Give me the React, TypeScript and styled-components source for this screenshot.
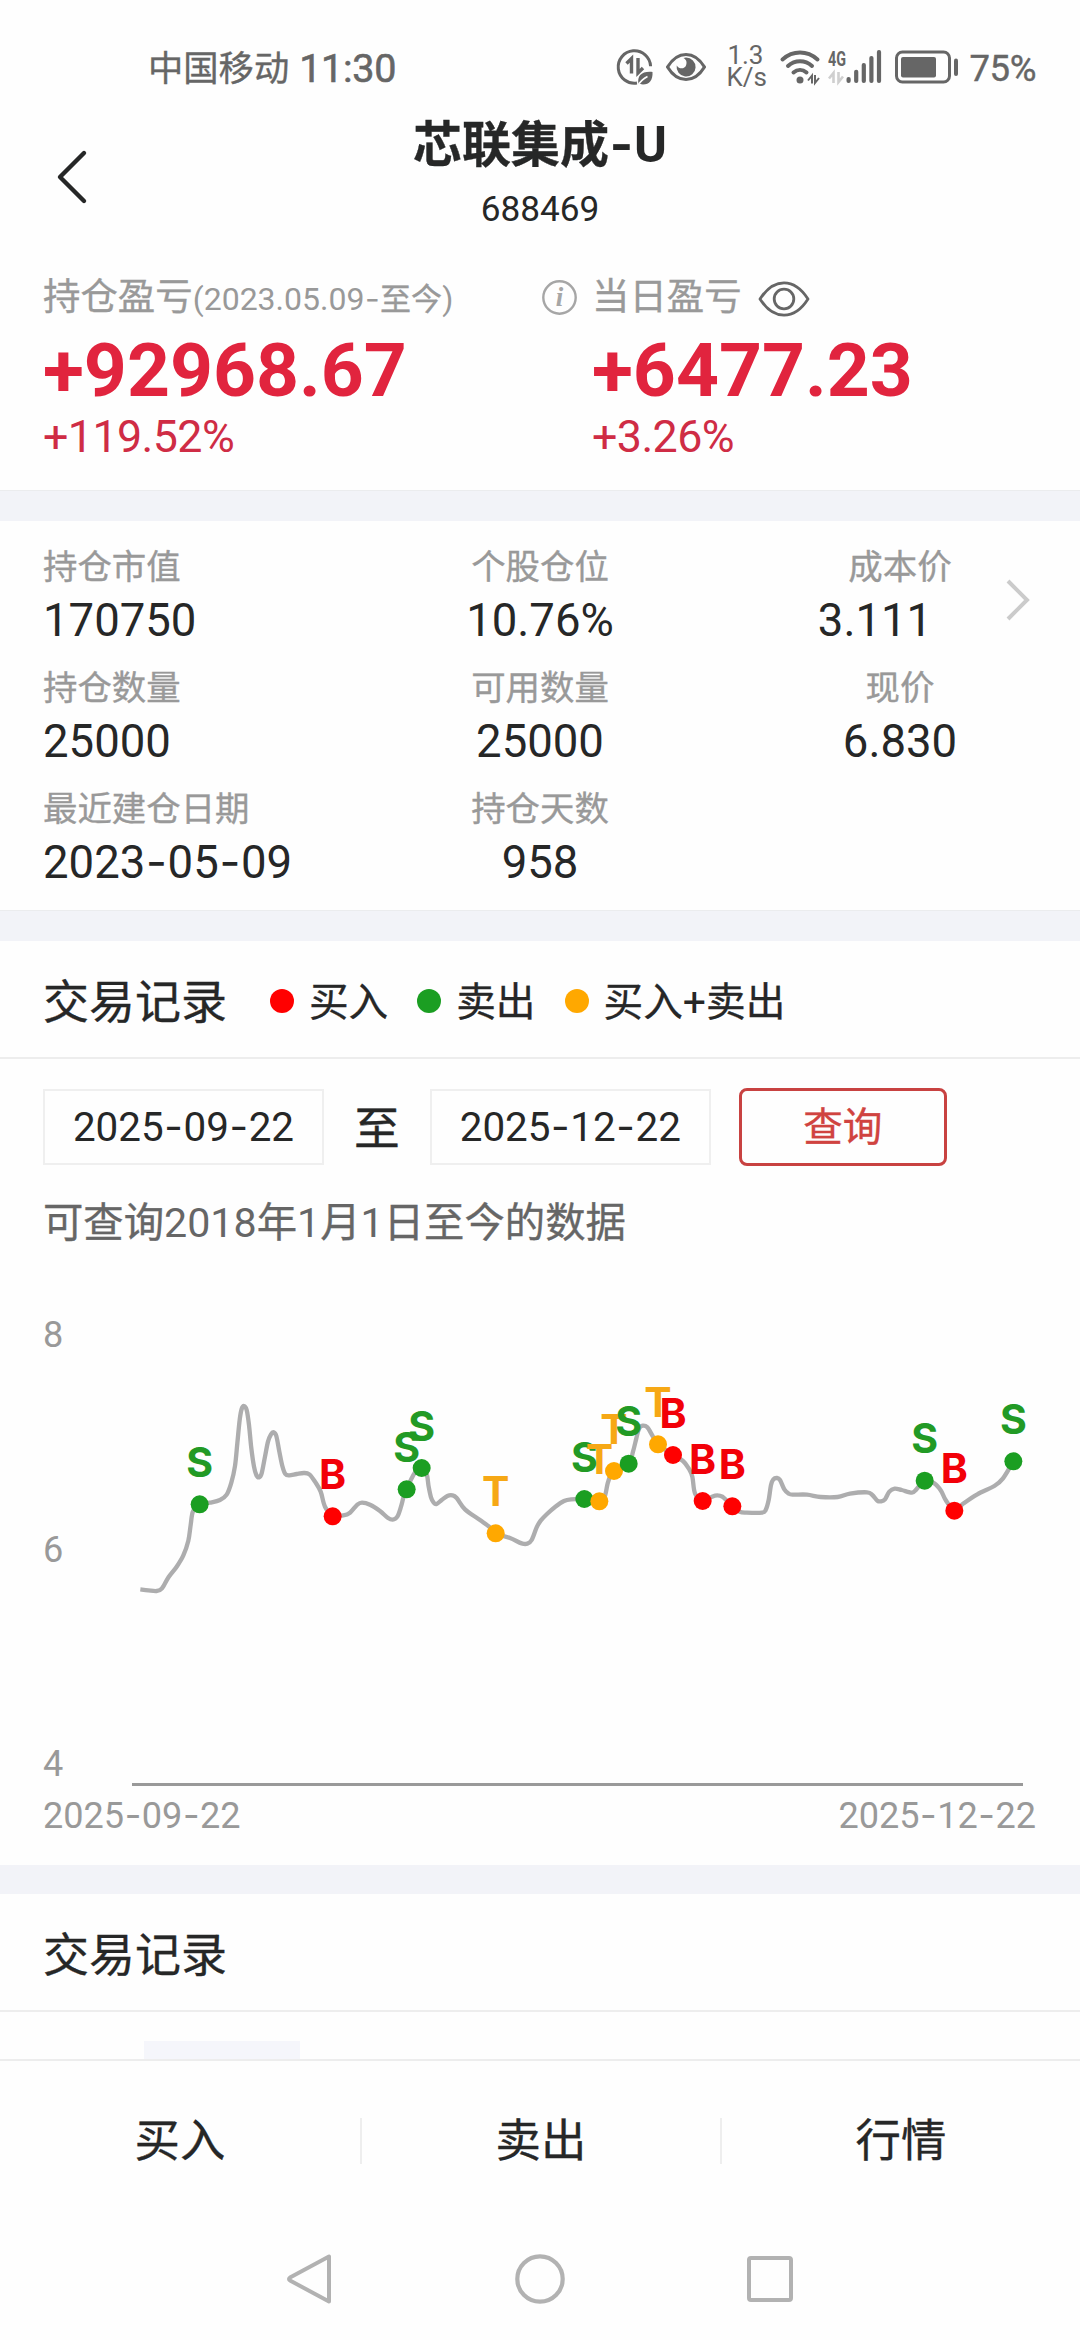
import React from 'react';
import styled, { createGlobalStyle, css } from 'styled-components';

const LATIN = `Roboto, "Noto Sans", "Noto Sans CJK SC", sans-serif`;
const HAN = `"Noto Sans CJK SC", "Noto Sans", sans-serif`;

const GlobalStyle = createGlobalStyle`
  *, *::before, *::after { box-sizing: border-box; }
  body { margin: 0; background: #fefefe; font-family: ${LATIN}; color: #262727; }
  svg { display: block; flex: none; overflow: visible; }
  button { font: inherit; color: inherit; background: none; border: 0; padding: 0; }
`;

const line = (size: number, height: number) => css`
  font-size: ${size}px;
  line-height: ${height}px;
  height: ${height}px;
  white-space: nowrap;
`;

/* ---------- mixed script text ---------- */

const HanRun = styled.span<{ $scale: number }>`
  font-family: ${HAN};
  font-size: ${p => p.$scale}em;
  line-height: 0;
  -webkit-text-stroke: 0.35px currentColor;
`;

const Dash = styled.span`
  font-family: Inter, sans-serif;
  font-size: 1em;
  line-height: 0;
  padding: 0 0.015em;
`;

function Runs({ text, scale = 0.97 }: { text: string; scale?: number }) {
  const parts = text.split(/([\u4e00-\u9fff]+|-)/).filter(Boolean);
  return (
    <>
      {parts.map((part, i) => {
        if (part === '-') return <Dash key={i}>-</Dash>;
        if (/[\u4e00-\u9fff]/.test(part)) return <HanRun key={i} $scale={scale}>{part}</HanRun>;
        return <React.Fragment key={i}>{part}</React.Fragment>;
      })}
    </>
  );
}

/* ---------- page frame ---------- */

const Screen = styled.div`
  width: 1080px;
  height: 2340px;
  overflow: hidden;
  display: flex;
  flex-direction: column;
  background: #fefefe;
`;

const Band = styled.div<{ $height: number; $edge?: boolean }>`
  flex: none;
  height: ${p => p.$height}px;
  background: #f2f3f8;
  border-top: ${p => (p.$edge ? '1px solid #ebecee' : '0')};
`;

/* ---------- status bar ---------- */

const StatusBar = styled.div`
  flex: none;
  display: flex;
  align-items: center;
  justify-content: space-between;
  height: 112px;
  padding: 22px 44px 0 148px;
  color: #666;
`;

const Carrier = styled.div`
  display: flex;
  gap: 10px;
  padding-top: 3px;
`;

const CarrierName = styled.span`
  ${line(36.4, 42)}
`;

const Clock = styled.span`
  ${line(39.5, 42)}
  letter-spacing: -0.3px;
  -webkit-text-stroke: 0.6px currentColor;
`;

const StatusIcons = styled.div`
  display: flex;
  align-items: center;
`;

const NetSpeed = styled.div`
  width: 38px;
  margin: 0 16px 2px 19px;
  font-size: 26px;
  line-height: 22px;
  text-align: center;
`;

const BatteryText = styled.span`
  ${line(36.5, 42)}
  margin: 4px 0 0 10px;
  letter-spacing: -0.4px;
  -webkit-text-stroke: 0.4px currentColor;
`;

const DataSaverIcon = () => (
  <svg width="38" height="38" viewBox="0 0 38 38" fill="none">
    <path d="M34.600 18.300A16.200 16.200 0 1 0 21 35" stroke="#666" strokeWidth="3" />
    <path d="M10.500 15.500l5-5v15M22 10v15l5-5" stroke="#666" strokeWidth="3.400" />
    <path d="M22.500 36c-1.500-8 3-13 14-12 .5 8-3 12.500-9.500 12.500-1 0-2-.3-3-.8z" fill="#666" />
    <path d="M21.500 38c3-5 6-7.500 10-9.500" stroke="#fefefe" strokeWidth="1.600" />
  </svg>
);

const ComfortSvg = styled.svg`
  margin-left: 11px;
`;

const EyeComfortIcon = () => (
  <ComfortSvg width="42" height="30" viewBox="0 0 42 30" fill="none">
    <path d="M2.500 15C8 6 14 2.500 21 2.500S34 6 39.500 15C34 24 28 27.500 21 27.500S8 24 2.500 15z" stroke="#666" strokeWidth="3.200" strokeLinejoin="round" />
    <path d="M21 5.500a9.500 9.500 0 1 1-9.300 8c2.500 4 8 3.500 9.300 0 .9-2.600 1-5.500-2.500-7.500z" fill="#666" />
  </ComfortSvg>
);

const WifiIcon = () => (
  <svg width="41" height="36" viewBox="0 0 41 36" fill="none">
    <path d="M2.500 10.500C13 1.300 27 1.300 37.500 10.500" stroke="#666" strokeWidth="4" strokeLinecap="round" />
    <path d="M8 17c7-6.300 17-6.300 24 0" stroke="#666" strokeWidth="4" strokeLinecap="round" />
    <path d="M13.500 23.500c4-3.500 9-3.500 13 0" stroke="#666" strokeWidth="4" strokeLinecap="round" />
    <circle cx="20" cy="31" r="3.500" fill="#666" />
    <path d="M28 31.500l4-5v8M35 26v8l4-5" stroke="#666" strokeWidth="2" />
  </svg>
);

const SignalSvg = styled.svg`
  margin-left: 7px;
`;

const SignalIcon = () => (
  <SignalSvg width="54" height="36" viewBox="0 0 54 36" fill="none">
    <text x="0" y="16.500" fontFamily={LATIN} fontSize="20" fontWeight="700" fill="#666" textLength="18" lengthAdjust="spacingAndGlyphs">4G</text>
    <path d="M1 29.500l4.500-5.500v10M10.500 23v10l4.500-5.500" stroke="#cfcfcf" strokeWidth="2.600" />
    {[28, 20.7, 14, 7, 1].map((top, i) => (
      <rect key={i} x={18.5 + i * 7.6} y={top} width="4.200" height={34 - top} rx="2" fill="#666" />
    ))}
  </SignalSvg>
);

const BatterySvg = styled.svg`
  margin-left: 13px;
`;

const BatteryIcon = () => (
  <BatterySvg width="64" height="34" viewBox="0 0 64 34" fill="none">
    <rect x="1.500" y="2" width="53" height="30" rx="6" stroke="#666" strokeWidth="3" />
    <rect x="6" y="7" width="35" height="20.500" rx="2" fill="#666" />
    <rect x="59" y="8.500" width="4" height="17.500" rx="2" fill="#666" />
  </BatterySvg>
);

/* ---------- title bar ---------- */

const TitleBar = styled.header`
  flex: none;
  display: grid;
  grid-template-columns: 120px 1fr 120px;
  height: 141px;
`;

const BackButton = styled.button`
  display: flex;
  align-items: center;
  height: 130px;
  padding-left: 56px;
`;

const Titles = styled.div`
  display: flex;
  flex-direction: column;
  align-items: center;
`;

const StockName = styled.h1`
  ${line(50, 66)}
  margin: 0;
  font-weight: 700;
`;

const StockCode = styled.div`
  ${line(35.2, 46)}
  margin-top: 8px;
`;

/* ---------- profit ---------- */

const Profit = styled.section`
  flex: none;
  display: flex;
  height: 237px;
  padding: 14px 44px 0 43px;
`;

const ProfitCell = styled.div<{ $width?: number }>`
  width: ${p => (p.$width ? `${p.$width}px` : 'auto')};
`;

const ProfitLabel = styled.div`
  ${line(32, 60)}
  display: flex;
  align-items: center;
  padding-top: 3px;
  color: #999;
`;

const ProfitAmount = styled.div`
  ${line(75, 80)}
  margin-top: 3px;
  font-weight: 700;
  color: #e1243e;
`;

const ProfitRate = styled.div`
  ${line(44.8, 50)}
  margin-top: 2px;
  letter-spacing: -0.6px;
  color: #cf2c45;
`;

const InfoSlot = styled.div`
  display: flex;
  align-items: center;
  width: 50px;
  height: 60px;
`;

const EyeSlot = styled.span`
  margin-left: 16px;
`;

const InfoIcon = () => (
  <svg width="36" height="38" viewBox="0 0 36 38" fill="none">
    <circle cx="17.500" cy="19.500" r="16.200" stroke="#a6a6a6" strokeWidth="2.400" />
    <text x="17.500" y="28" textAnchor="middle" fontFamily={`"Liberation Serif", serif`} fontSize="27" fontStyle="italic" fontWeight="700" fill="#a6a6a6">i</text>
  </svg>
);

const EyeIcon = () => (
  <svg width="52" height="36" viewBox="0 0 52 36" fill="none">
    <path d="M2 18C9 7 17 1.800 26 1.800S43 7 50 18C43 29 35 34.200 26 34.200S9 29 2 18z" stroke="#666" strokeWidth="2.800" strokeLinejoin="round" />
    <circle cx="26" cy="18" r="9.800" stroke="#666" strokeWidth="2.800" />
  </svg>
);

/* ---------- position figures ---------- */

const Position = styled.section`
  flex: none;
  position: relative;
  display: grid;
  grid-template-columns: repeat(3, 360px);
  grid-auto-rows: 121px;
  height: 389px;
  padding-top: 23px;
`;

const Figure = styled.div<{ $first?: boolean }>`
  display: flex;
  flex-direction: column;
  align-items: ${p => (p.$first ? 'flex-start' : 'center')};
  padding-left: ${p => (p.$first ? 43 : 0)}px;
`;

const FigureLabel = styled.div`
  ${line(35.5, 46)}
  color: #999;
`;

const FigureValue = styled.div<{ $linked?: boolean }>`
  ${line(45.5, 56)}
  margin-top: 3px;
  padding-right: ${p => (p.$linked ? 50 : 0)}px;
`;

const MoreArrow = styled.button`
  position: absolute;
  top: 56px;
  right: 47px;
`;

/* ---------- legend ---------- */

const SectionHead = styled.div`
  flex: none;
  display: flex;
  align-items: center;
  height: 118px;
  padding: 5px 44px 0 43px;
  border-bottom: 2px solid #ededed;
`;

const SectionTitle = styled.h2`
  ${line(47.4, 60)}
  margin: 0 14px 0 0;
  font-weight: 400;
`;

const LegendItem = styled.div`
  ${line(40.9, 50)}
  display: flex;
  align-items: center;
  gap: 15px;
  margin-left: 29px;
`;

const LegendDot = styled.i<{ $color: string }>`
  width: 24px;
  height: 24px;
  margin-bottom: 2px;
  border-radius: 50%;
  background: ${p => p.$color};
`;

/* ---------- query ---------- */

const Query = styled.section`
  flex: none;
  height: 806px;
  padding: 29px 44px 0 43px;
`;

const QueryRow = styled.div`
  display: flex;
  align-items: center;
  height: 78px;
`;

const DateField = styled.div`
  ${line(40.4, 73)}
  width: 281px;
  height: 76px;
  border: 2px solid #efefef;
  text-align: center;
`;

const To = styled.span`
  ${line(47.2, 60)}
  margin: 4px 30px 0;
`;

const SearchButton = styled.button`
  font-size: 40.8px;
  line-height: 72px;
  width: 208px;
  height: 78px;
  margin-left: 28px;
  border: 3px solid #c84241;
  border-radius: 8px;
  color: #d04340;
`;

const Hint = styled.p`
  ${line(41.2, 50)}
  margin: 32px 0 64px;
  color: #666;
`;

/* ---------- chart ---------- */

const Chart = styled.div`
  display: flex;
  height: 475px;
`;

const YAxis = styled.div`
  display: flex;
  flex-direction: column;
  justify-content: space-between;
  width: 89px;
`;

const Tick = styled.div`
  ${line(36.1, 46)}
  color: #999;
`;

const Plot = styled.div`
  width: 891px;
  height: 474px;
  border-bottom: 3px solid #999;
`;

const XAxis = styled.div`
  display: flex;
  justify-content: space-between;
  margin-top: 6px;
`;

type Kind = 'S' | 'B' | 'T';

const dotColor: Record<Kind, string> = { S: '#1b9e22', B: '#ff0000', T: '#ffa800' };
const letterColor: Record<Kind, string> = { S: '#229a25', B: '#f20008', T: '#f6a815' };

const price: [number, number][] = [
  [61, 748], [85, 751], [110, 753], [126, 745], [146, 711], [170, 680], [190, 646], [205, 602], [212, 555],
  [219, 514], [239, 493], [270, 488], [300, 480], [320, 464], [334, 428], [345, 378], [352, 310], [359, 240],
  [365, 207], [372, 198], [380, 210], [387, 255], [394, 325], [402, 380], [409, 405], [417, 412], [425, 400],
  [435, 350], [444, 305], [453, 283], [461, 277], [469, 288], [478, 335], [487, 378], [496, 402], [508, 406],
  [530, 402], [552, 399], [568, 403], [585, 425], [602, 455], [615, 500], [638, 527], [670, 526], [690, 518],
  [712, 494], [726, 488], [750, 494], [780, 513], [803, 533], [818, 539], [832, 530], [843, 500], [851, 470],
  [860, 448], [875, 415], [890, 390], [905, 384], [920, 403], [926, 440], [933, 472], [941, 488], [950, 492],
  [965, 480], [982, 468], [997, 466], [1010, 474], [1035, 508], [1080, 540], [1110, 562], [1127, 580],
  [1170, 594], [1205, 610], [1222, 611], [1235, 600], [1250, 562], [1262, 542], [1281, 522], [1306, 500],
  [1332, 483], [1353, 478], [1393, 477], [1438, 484], [1454, 470], [1463, 430], [1472, 405], [1482, 393],
  [1526, 371], [1539, 335], [1549, 295], [1557, 266], [1568, 257], [1582, 262], [1599, 290], [1614, 313],
  [1659, 345], [1689, 363], [1706, 385], [1717, 410], [1725, 460], [1748, 483], [1776, 470], [1792, 466],
  [1807, 470], [1823, 485], [1837, 499], [1859, 515], [1880, 518], [1926, 518], [1937, 510], [1946, 480],
  [1953, 435], [1960, 418], [1971, 414], [1980, 420], [1993, 448], [2006, 461], [2019, 464], [2061, 464],
  [2102, 471], [2153, 471], [2190, 461], [2241, 457], [2257, 465], [2272, 482], [2283, 484], [2295, 478],
  [2308, 455], [2324, 446], [2345, 450], [2376, 458], [2389, 448], [2414, 422], [2443, 430], [2463, 452],
  [2477, 480], [2503, 512], [2531, 490], [2572, 463], [2623, 438], [2649, 415], [2680, 364],
];

const trades: [Kind, number, number][] = [
  ['S', 239, 493], ['B', 638, 529], ['S', 860, 448], ['S', 905, 384], ['T', 1127, 580], ['S', 1393, 477],
  ['T', 1438, 484], ['T', 1482, 393], ['S', 1526, 371], ['T', 1614, 313], ['B', 1659, 345], ['B', 1748, 483],
  ['B', 1837, 499], ['S', 2414, 422], ['B', 2503, 512], ['S', 2680, 364],
];

function smooth(points: [number, number][]) {
  let d = `M${points[0][0]} ${points[0][1]}`;
  for (let i = 0; i < points.length - 1; i++) {
    const a = points[Math.max(i - 1, 0)];
    const b = points[i];
    const c = points[i + 1];
    const e = points[Math.min(i + 2, points.length - 1)];
    d += `C${b[0] + (c[0] - a[0]) / 6} ${b[1] + (c[1] - a[1]) / 6} ${c[0] - (e[0] - b[0]) / 6} ${c[1] - (e[1] - b[1]) / 6} ${c[0]} ${c[1]}`;
  }
  return d;
}

const PriceGraph = () => (
  <svg width="891" height="471" viewBox="36 -84 2673 1413">
    <path d={smooth(price)} fill="none" stroke="#adadae" strokeWidth="13" strokeLinejoin="round" />
    {trades.map(([kind, x, y]) => (
      <circle key={x} cx={x} cy={y} r="27" fill={dotColor[kind]} />
    ))}
    {trades.map(([kind, x, y]) => (
      <text key={x} x={x} y={y - 82} textAnchor="middle" fontFamily="Inter, sans-serif" fontWeight="700" fontSize="123" fill={letterColor[kind]}>
        {kind}
      </text>
    ))}
  </svg>
);

/* ---------- records and bottom bars ---------- */

const Records = styled.div`
  flex: none;
  height: 47px;
  padding: 29px 0 0 144px;
`;

const RecordTab = styled.div`
  width: 156px;
  height: 18px;
  background: #f5f6fb;
`;

const ActionBar = styled.nav`
  flex: none;
  display: grid;
  grid-template-columns: repeat(3, 1fr);
  align-items: center;
  height: 162px;
  border-top: 2px solid #ededed;
`;

const Action = styled.button<{ $divided?: boolean }>`
  ${line(46.8, 46)}
  border-left: ${p => (p.$divided ? '2px solid #eeeeee' : '0')};
`;

const SystemNav = styled.div`
  flex: none;
  display: grid;
  grid-template-columns: repeat(3, 230px);
  justify-content: center;
  justify-items: center;
  align-items: center;
  height: 116px;
`;

const legend = [
  { color: '#ff0000', text: '买入' },
  { color: '#1b9e22', text: '卖出' },
  { color: '#ffa800', text: '买入+卖出' },
];

const figures = [
  ['持仓市值', '170750'],
  ['个股仓位', '10.76%'],
  ['成本价', '3.111'],
  ['持仓数量', '25000'],
  ['可用数量', '25000'],
  ['现价', '6.830'],
  ['最近建仓日期', '2023-05-09'],
  ['持仓天数', '958'],
];

export default function App() {
  return (
    <Screen>
      <GlobalStyle />
      <StatusBar>
        <Carrier>
          <CarrierName><Runs text="中国移动" /></CarrierName>
          <Clock>11:30</Clock>
        </Carrier>
        <StatusIcons>
          <DataSaverIcon />
          <EyeComfortIcon />
          <NetSpeed>1.3<br />K/s</NetSpeed>
          <WifiIcon />
          <SignalIcon />
          <BatteryIcon />
          <BatteryText>75%</BatteryText>
        </StatusIcons>
      </StatusBar>

      <TitleBar>
        <BackButton>
          <svg width="32" height="54" viewBox="0 0 32 54" fill="none">
            <path d="M28 3L4 27l24 24" stroke="#262727" strokeWidth="4.400" strokeLinecap="round" strokeLinejoin="round" />
          </svg>
        </BackButton>
        <Titles>
          <StockName><Runs text="芯联集成-U" scale={0.98} /></StockName>
          <StockCode>688469</StockCode>
        </Titles>
      </TitleBar>

      <Profit>
        <ProfitCell $width={499}>
          <ProfitLabel>
            <span><Runs text="持仓盈亏" scale={1.17} /><Runs text="(2023.05.09-至今)" /></span>
          </ProfitLabel>
          <ProfitAmount>+92968.67</ProfitAmount>
          <ProfitRate>+119.52%</ProfitRate>
        </ProfitCell>
        <InfoSlot><InfoIcon /></InfoSlot>
        <ProfitCell>
          <ProfitLabel>
            <span><Runs text="当日盈亏" scale={1.17} /></span>
            <EyeSlot><EyeIcon /></EyeSlot>
          </ProfitLabel>
          <ProfitAmount>+6477.23</ProfitAmount>
          <ProfitRate>+3.26%</ProfitRate>
        </ProfitCell>
      </Profit>

      <Band $height={31} $edge />

      <Position>
        {figures.map(([label, value], i) => (
          <Figure key={label} $first={i % 3 === 0}>
            <FigureLabel><Runs text={label} /></FigureLabel>
            <FigureValue $linked={i === 2}><Runs text={value} /></FigureValue>
          </Figure>
        ))}
        <MoreArrow>
          <svg width="28" height="46" viewBox="0 0 28 46" fill="none">
            <path d="M3 4l19 19L3 42" stroke="#cbcbcb" strokeWidth="4" />
          </svg>
        </MoreArrow>
      </Position>

      <Band $height={31} $edge />

      <SectionHead>
        <SectionTitle><Runs text="交易记录" /></SectionTitle>
        {legend.map(item => (
          <LegendItem key={item.text}>
            <LegendDot $color={item.color} />
            <span><Runs text={item.text} /></span>
          </LegendItem>
        ))}
      </SectionHead>

      <Query>
        <QueryRow>
          <DateField><Runs text="2025-09-22" /></DateField>
          <To><Runs text="至" /></To>
          <DateField><Runs text="2025-12-22" /></DateField>
          <SearchButton><Runs text="查询" /></SearchButton>
        </QueryRow>
        <Hint><Runs text="可查询2018年1月1日至今的数据" scale={0.98} /></Hint>
        <Chart>
          <YAxis>
            <Tick>8</Tick>
            <Tick>6</Tick>
            <Tick>4</Tick>
          </YAxis>
          <Plot><PriceGraph /></Plot>
        </Chart>
        <XAxis>
          <Tick><Runs text="2025-09-22" /></Tick>
          <Tick><Runs text="2025-12-22" /></Tick>
        </XAxis>
      </Query>

      <Band $height={29} />

      <SectionHead>
        <SectionTitle><Runs text="交易记录" /></SectionTitle>
      </SectionHead>

      <Records><RecordTab /></Records>

      <ActionBar>
        <Action><Runs text="买入" /></Action>
        <Action $divided><Runs text="卖出" /></Action>
        <Action $divided><Runs text="行情" /></Action>
      </ActionBar>

      <SystemNav>
        <svg width="46" height="52" viewBox="0 0 46 52" fill="none">
          <path d="M42 3.500v45L3 27.500q-2-1.500 0-3z" stroke="#b2b2b2" strokeWidth="4" strokeLinejoin="round" />
        </svg>
        <svg width="50" height="50" viewBox="0 0 50 50" fill="none">
          <circle cx="25" cy="25" r="22.700" stroke="#b2b2b2" strokeWidth="4.200" />
        </svg>
        <svg width="46" height="46" viewBox="0 0 46 46" fill="none">
          <rect x="2" y="2" width="42" height="42" rx="2" stroke="#b2b2b2" strokeWidth="4" />
        </svg>
      </SystemNav>
    </Screen>
  );
}
